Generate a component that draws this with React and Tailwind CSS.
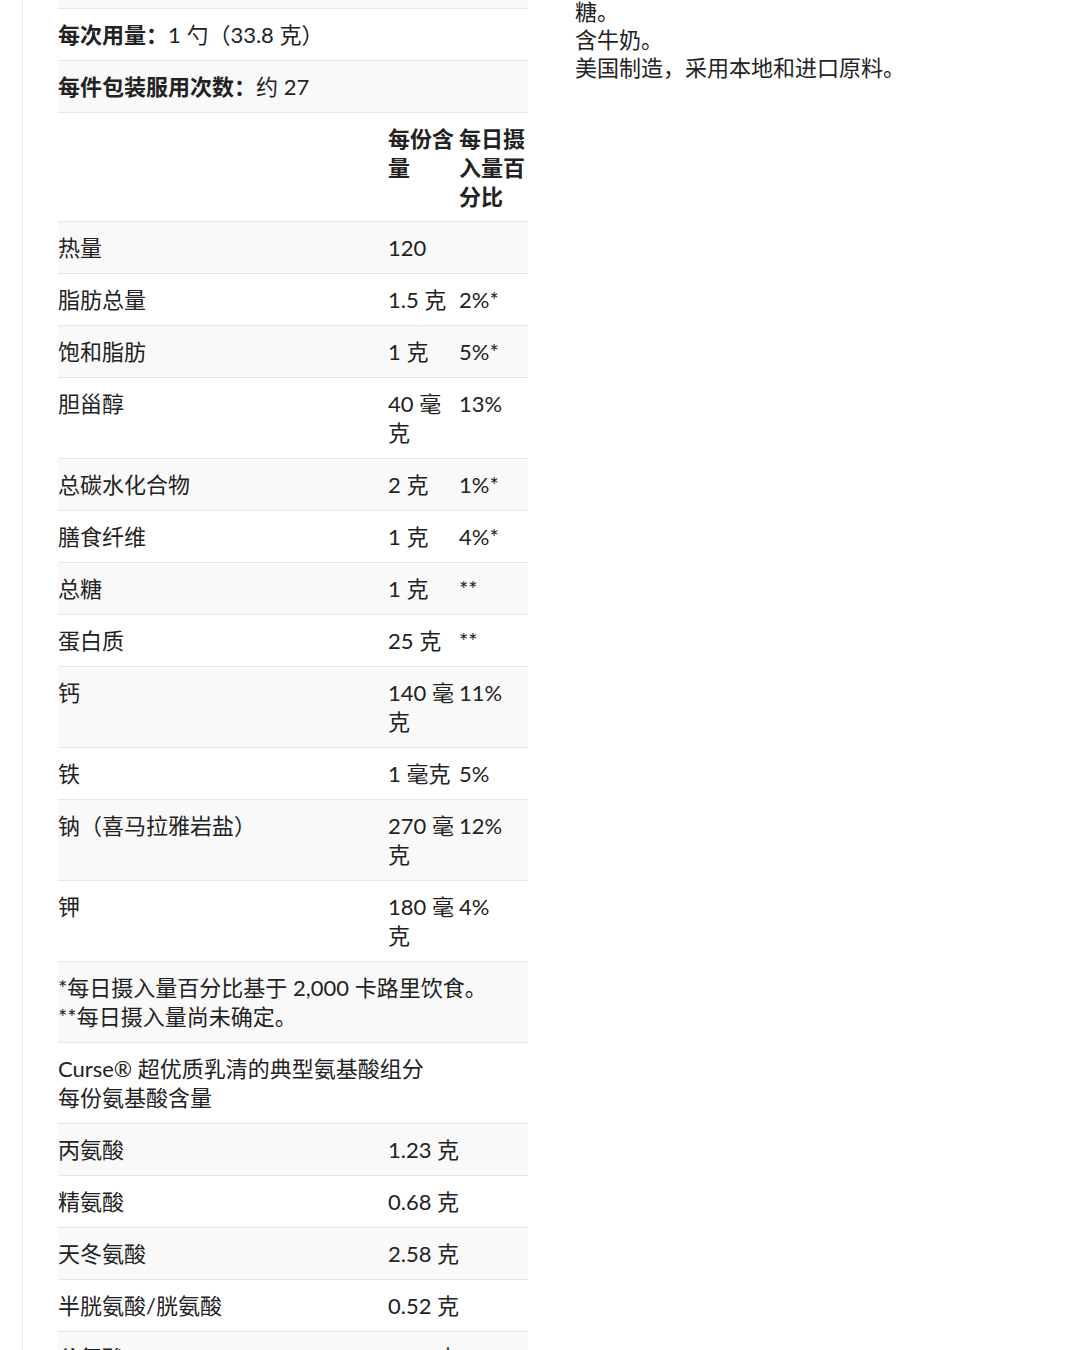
const nutrients = [
  ["热量", "120", ""],
  ["脂肪总量", "1.5 克", "2%*"],
  ["饱和脂肪", "1 克", "5%*"],
  ["胆甾醇", "40 毫克", "13%"],
  ["总碳水化合物", "2 克", "1%*"],
  ["膳食纤维", "1 克", "4%*"],
  ["总糖", "1 克", "**"],
  ["蛋白质", "25 克", "**"],
  ["钙", "140 毫克", "11%"],
  ["铁", "1 毫克", "5%"],
  ["钠（喜马拉雅岩盐）", "270 毫克", "12%"],
  ["钾", "180 毫克", "4%"],
];

const aminos = [
  ["丙氨酸", "1.23 克"],
  ["精氨酸", "0.68 克"],
  ["天冬氨酸", "2.58 克"],
  ["半胱氨酸/胱氨酸", "0.52 克"],
  ["谷氨酸", "4.07 克"],
  ["甘氨酸", "0.45 克"],
];

function Row({ gray, children, className = "" }) {
  return (
    <div
      className={`border-b border-[#e6e6e6] ${gray ? "bg-[#f9f9f9]" : "bg-white"} ${className}`}
    >
      {children}
    </div>
  );
}

export default function App() {
  // first visible row (cut off at the top) is gray, so stripes start on white
  let i = 1;
  const next = () => i++ % 2 === 0;

  return (
    <div
      className="min-h-[1350px] bg-white text-[22px] leading-[29px] text-[#222]"
      style={{ fontFamily: 'Lato, "Noto Sans CJK SC", sans-serif' }}
    >
      <div className="ml-[22px] flex border-l border-[#ececec] pl-[35px]">
        <div className="w-[470px] shrink-0">
          <div className="h-[9px] border-b border-[#e6e6e6] bg-[#f9f9f9]" />
          <Row gray={next()} className="py-[11px]">
            <span className="font-bold">每次用量：</span>1 勺（33.8 克）
          </Row>
          <Row gray={next()} className="py-[11px]">
            <span className="font-bold">每件包装服用次数：</span>约 27
          </Row>
          <Row gray={next()} className="grid grid-cols-[330px_71px_69px] pt-[11px] pb-[10px] font-bold">
            <div />
            <div>每份含量</div>
            <div>每日摄入量百分比</div>
          </Row>
          {nutrients.map(([name, amt, pct]) => (
            <Row key={name} gray={next()} className="grid grid-cols-[330px_71px_69px] py-[11px]">
              <div>{name}</div>
              <div className="pr-[3px]">{amt}</div>
              <div>{pct}</div>
            </Row>
          ))}
          <Row gray={next()} className="py-[11px]">
            <div>*每日摄入量百分比基于 2,000 卡路里饮食。</div>
            <div>**每日摄入量尚未确定。</div>
          </Row>
          <Row gray={next()} className="py-[11px]">
            <div>Curse® 超优质乳清的典型氨基酸组分</div>
            <div>每份氨基酸含量</div>
          </Row>
          {aminos.map(([name, amt]) => (
            <Row key={name} gray={next()} className="grid grid-cols-[330px_140px] py-[11px]">
              <div>{name}</div>
              <div>{amt}</div>
            </Row>
          ))}
        </div>
        <div className="ml-[47px] mt-[-2px] leading-[28px]">
          <p>糖。</p>
          <p>含牛奶。</p>
          <p>美国制造，采用本地和进口原料。</p>
        </div>
      </div>
    </div>
  );
}
